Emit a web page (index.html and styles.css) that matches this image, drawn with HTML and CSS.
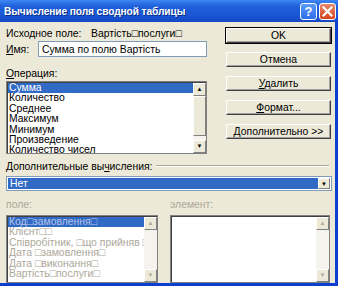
FILE: index.html
```html
<!DOCTYPE html>
<html>
<head>
    <title>Вычисление поля сводной таблицы</title>
    <link rel="stylesheet" href="styles.css">
</head>
<body>
    <div class="window">
        <div class="titlebar">
            <span class="title">Вычисление поля сводной таблицы</span>
            <div class="caption-buttons">
                <span class="cbtn help">?</span>
                <span class="cbtn close">
                    <svg width="11" height="11" viewBox="0 0 11 11"><path d="M1.5 1.5 L9.5 9.5 M9.5 1.5 L1.5 9.5" stroke="#fff" stroke-width="2.2" stroke-linecap="square"/></svg>
                </span>
            </div>
        </div>

        <div class="content">
            <div class="top">
                <div class="left">
                    <div class="source-row">
                        <span class="source-label">Исходное поле:</span>
                        <span>Вартість□послуги□</span>
                    </div>
                    <div class="name-row">
                        <span class="name-label"><u>И</u>мя:</span>
                        <div class="textbox">Сумма по полю Вартість</div>
                    </div>
                    <div class="caption"><u>О</u>перация:</div>
                    <div class="listbox ops">
                        <div class="items">
                            <div class="item selected">Сумма</div>
                            <div class="item">Количество</div>
                            <div class="item">Среднее</div>
                            <div class="item">Максимум</div>
                            <div class="item">Минимум</div>
                            <div class="item">Произведение</div>
                            <div class="item">Количество чисел</div>
                        </div>
                        <div class="scrollbar">
                            <span class="sb-btn">▲</span>
                            <span class="sb-thumb"></span>
                            <span class="sb-track"></span>
                            <span class="sb-btn">▼</span>
                        </div>
                    </div>
                </div>

                <div class="buttons">
                    <button class="btn default">OK</button>
                    <button class="btn">Отмена</button>
                    <button class="btn"><u>У</u>далить</button>
                    <button class="btn"><u>Ф</u>ормат...</button>
                    <button class="btn"><u>Д</u>ополнительно &gt;&gt;</button>
                </div>
            </div>

            <div class="group-head">
                <span>Дополнительные вы<u>ч</u>исления:</span>
                <span class="rule"></span>
            </div>
            <div class="combo">
                <div class="combo-value">Нет</div>
                <span class="combo-arrow">▼</span>
            </div>

            <div class="pair">
                <div class="column">
                    <div class="caption disabled">поле:</div>
                    <div class="listbox fields">
                        <div class="items">
                            <div class="item selected-off">Код□замовлення□</div>
                            <div class="item">Клієнт□□</div>
                            <div class="item">Співробітник, □що прийняв □за</div>
                            <div class="item">Дата □замовлення□</div>
                            <div class="item">Дата □виконання□</div>
                            <div class="item">Вартість□послуги□</div>
                        </div>
                        <div class="scrollbar off">
                            <span class="sb-btn">▲</span>
                            <span class="sb-track"></span>
                            <span class="sb-btn">▼</span>
                        </div>
                    </div>
                </div>
                <div class="column wide">
                    <div class="caption disabled">элемент:</div>
                    <div class="listbox elements">
                        <div class="items"></div>
                        <div class="scrollbar off">
                            <span class="sb-btn">▲</span>
                            <span class="sb-track"></span>
                            <span class="sb-btn">▼</span>
                        </div>
                    </div>
                </div>
            </div>
        </div>
    </div>
</body>
</html>
```

FILE: styles.css
```css
body { margin: 0; font-family: "Liberation Sans", Arial, sans-serif; font-size: 10.4px; color: #000; }

.window {
    width: 338px;
    height: 286px;
    display: flex;
    flex-direction: column;
    background: #ece9d8;
    overflow: hidden;
}

.titlebar {
    height: 22px;
    flex: none;
    display: flex;
    align-items: center;
    justify-content: space-between;
    padding: 0 2px 0 4px;
    background: linear-gradient(#3d87f2, #1e5fdc 30%, #1a56d4 70%, #1448c4);
}
.title { color: #fff; font-weight: bold; font-size: 10.2px; letter-spacing: -0.1px; text-shadow: 1px 1px #0a2f8a; }
.caption-buttons { display: flex; gap: 2px; margin-top: 1px; }
.cbtn {
    width: 17px;
    height: 17px;
    box-sizing: border-box;
    border: 1px solid #fff;
    border-radius: 3px;
    display: flex;
    align-items: center;
    justify-content: center;
    color: #fff;
    font-weight: bold;
    font-size: 13px;
}
.help { background: linear-gradient(#5b9af8, #2f6ee8); }
.close { background: linear-gradient(#e98a6c, #d6431f); }

.content {
    flex: 1;
    padding: 5px 0 0 6px;
    border-right: 3px solid #0b3fd0;
    border-bottom: 3px solid #0b3fd0;
}
.top { display: flex; gap: 19px; }
.left { width: 201px; }

.source-row { height: 13px; line-height: 13px; display: flex; }
.source-label { width: 85px; }
.name-row { display: flex; align-items: center; margin-top: 1px; }
.name-label { width: 32px; }
.textbox {
    flex: 1;
    height: 16px;
    line-height: 15px;
    box-sizing: border-box;
    background: #fff;
    border: 1px solid #7f9db9;
    padding-left: 3px;
}
.caption { height: 12px; line-height: 12px; margin-top: 11px; }
.disabled { color: #aca899; }

.listbox {
    display: flex;
    box-sizing: border-box;
    background: #fff;
    border: 1px solid #808080;
    box-shadow: inset 1px 1px #404040;
    padding: 1px 0 0 1px;
}
.ops { height: 73px; margin-top: 1px; }
.items { flex: 1; overflow: hidden; }
.item { height: 10.4px; line-height: 10.4px; padding-left: 1px; white-space: nowrap; }
.selected { background: #316ac5; color: #fff; }
.fields .item { color: #aca899; }
.fields .selected-off { background: #316ac5; color: #b6c6e8; }

.scrollbar { width: 13px; display: flex; flex-direction: column; background: #f4f3ee; }
.sb-btn {
    height: 13px;
    box-sizing: border-box;
    background: #ece9d8;
    border: 1px solid;
    border-color: #fff #808080 #808080 #fff;
    font-size: 6px;
    line-height: 11px;
    text-align: center;
    color: #000;
}
.sb-thumb {
    height: 40px;
    box-sizing: border-box;
    background: #ece9d8;
    border: 1px solid;
    border-color: #fff #808080 #808080 #fff;
}
.sb-track { flex: 1; }
.off .sb-btn { color: #aca899; }

.buttons { display: flex; flex-direction: column; gap: 9px; padding-top: 1px; }
.btn {
    width: 105px;
    height: 15px;
    padding: 0;
    font-family: "Liberation Sans", Arial, sans-serif;
    font-size: 10.4px;
    background: #ece9d8;
    border: 1px solid;
    border-color: #fff #404040 #404040 #fff;
    box-shadow: inset -1px -1px #a0a0a0;
    line-height: 12px;
}
.default { outline: 1px solid #000; }

.group-head { display: flex; align-items: center; gap: 4px; margin-top: 6px; height: 12px; }
.rule { flex: 1; height: 0; border-top: 1px solid #aca899; border-bottom: 1px solid #fff; margin-right: 6px; }

.combo {
    display: flex;
    height: 15px;
    margin: 4px 3px 0 0;
    box-sizing: border-box;
    border: 1px solid #7f9db9;
    background: #fff;
    padding: 1px;
}
.combo-value { flex: 1; background: #316ac5; color: #fff; line-height: 11px; padding-left: 2px; }
.combo-arrow {
    width: 12px;
    background: #ece9d8;
    border: 1px solid;
    border-color: #fff #808080 #808080 #fff;
    box-sizing: border-box;
    font-size: 6px;
    line-height: 10px;
    text-align: center;
}

.pair { display: flex; gap: 12px; }
.column { width: 152px; }
.column.wide { width: 160px; }
.pair .caption { margin-top: 8px; }
.fields, .elements { height: 68px; margin-top: 4px; }
```
